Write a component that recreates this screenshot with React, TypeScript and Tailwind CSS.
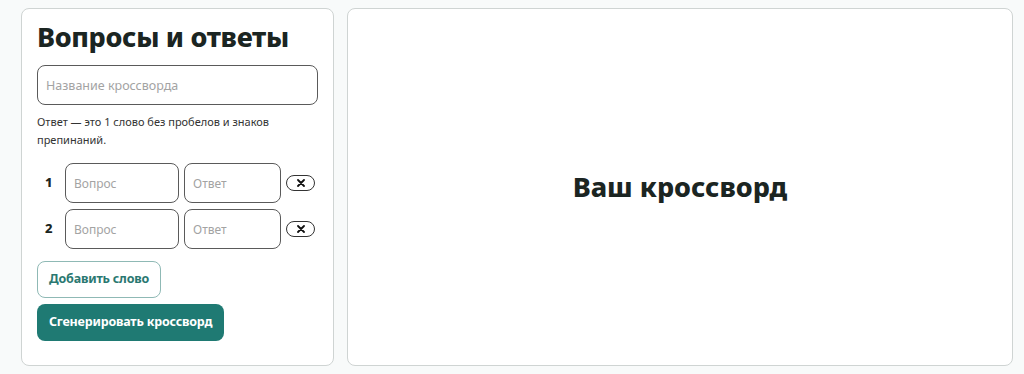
import { useState } from 'react';

type Row = { id: number; question: string; answer: string };

export default function App() {
  const [rows, setRows] = useState<Row[]>([
    { id: 1, question: '', answer: '' },
    { id: 2, question: '', answer: '' },
  ]);

  const addRow = () => setRows((r) => [...r, { id: Date.now(), question: '', answer: '' }]);
  const removeRow = (id: number) => setRows((r) => r.filter((x) => x.id !== id));

  return (
    <div
      className="flex h-[374px] gap-[13px] bg-[#f8fafa] pt-[8px] pb-[8px] pl-[21px] pr-[11px] text-[#1b2522]"
      style={{ fontFamily: '"Noto Sans", "Open Sans", sans-serif' }}
    >
      {/* левая панель */}
      <div className="w-[313px] shrink-0 rounded-lg border border-[#cfd4d3] bg-white px-[15px] pt-[11px]">
        <h1 className="text-[27px] font-extrabold leading-[34px] tracking-[-0.3px]">Вопросы и ответы</h1>
        <input
          placeholder="Название кроссворда"
          className="mt-[11px] h-10 w-[281px] rounded-lg border border-[#5a5a5a] px-2 text-[12.5px] outline-none placeholder:text-[#a3a3a3]"
        />
        <p className="mt-[8px] text-[11px] leading-[18px] text-[#333]">
          Ответ — это 1 слово без пробелов и знаков препинаний.
        </p>

        <div className="mt-[14px] flex flex-col gap-[6px]">
          {rows.map((row, i) => (
            <div key={row.id} className="flex items-center">
              <span className="w-[28px] pl-[8px] text-[13px] font-extrabold">{i + 1}</span>
              <input
                placeholder="Вопрос"
                className="h-10 w-[114px] rounded-lg border border-[#5a5a5a] px-2 text-[12px] outline-none placeholder:text-[#a3a3a3]"
              />
              <input
                placeholder="Ответ"
                className="ml-[5px] h-10 w-[97px] rounded-lg border border-[#5a5a5a] px-2 text-[12px] outline-none placeholder:text-[#a3a3a3]"
              />
              <button
                onClick={() => removeRow(row.id)}
                className="ml-[5px] flex h-[16px] w-[29px] items-center justify-center rounded-full border border-[#333]"
              >
                <svg width="8" height="8" viewBox="0 0 8 8">
                  <path d="M1 1L7 7M7 1L1 7" stroke="#111" strokeWidth="1.8" strokeLinecap="round" />
                </svg>
              </button>
            </div>
          ))}
        </div>

        <button
          onClick={addRow}
          className="mt-3 h-[37px] rounded-lg border border-[#8fb9b5] px-[11px] text-[12.5px] font-bold tracking-[-0.2px] text-[#2a7871]"
        >
          Добавить слово
        </button>
        <button className="mt-[6px] block h-[37px] rounded-lg bg-[#1f7a73] px-3 text-[12.5px] font-bold tracking-[-0.2px] text-white">
          Сгенерировать кроссворд
        </button>
      </div>

      {/* правая панель */}
      <div className="flex flex-1 items-center justify-center rounded-lg border border-[#cfd4d3] bg-white">
        <h2 className="text-[27px] font-extrabold">Ваш кроссворд</h2>
      </div>
    </div>
  );
}
